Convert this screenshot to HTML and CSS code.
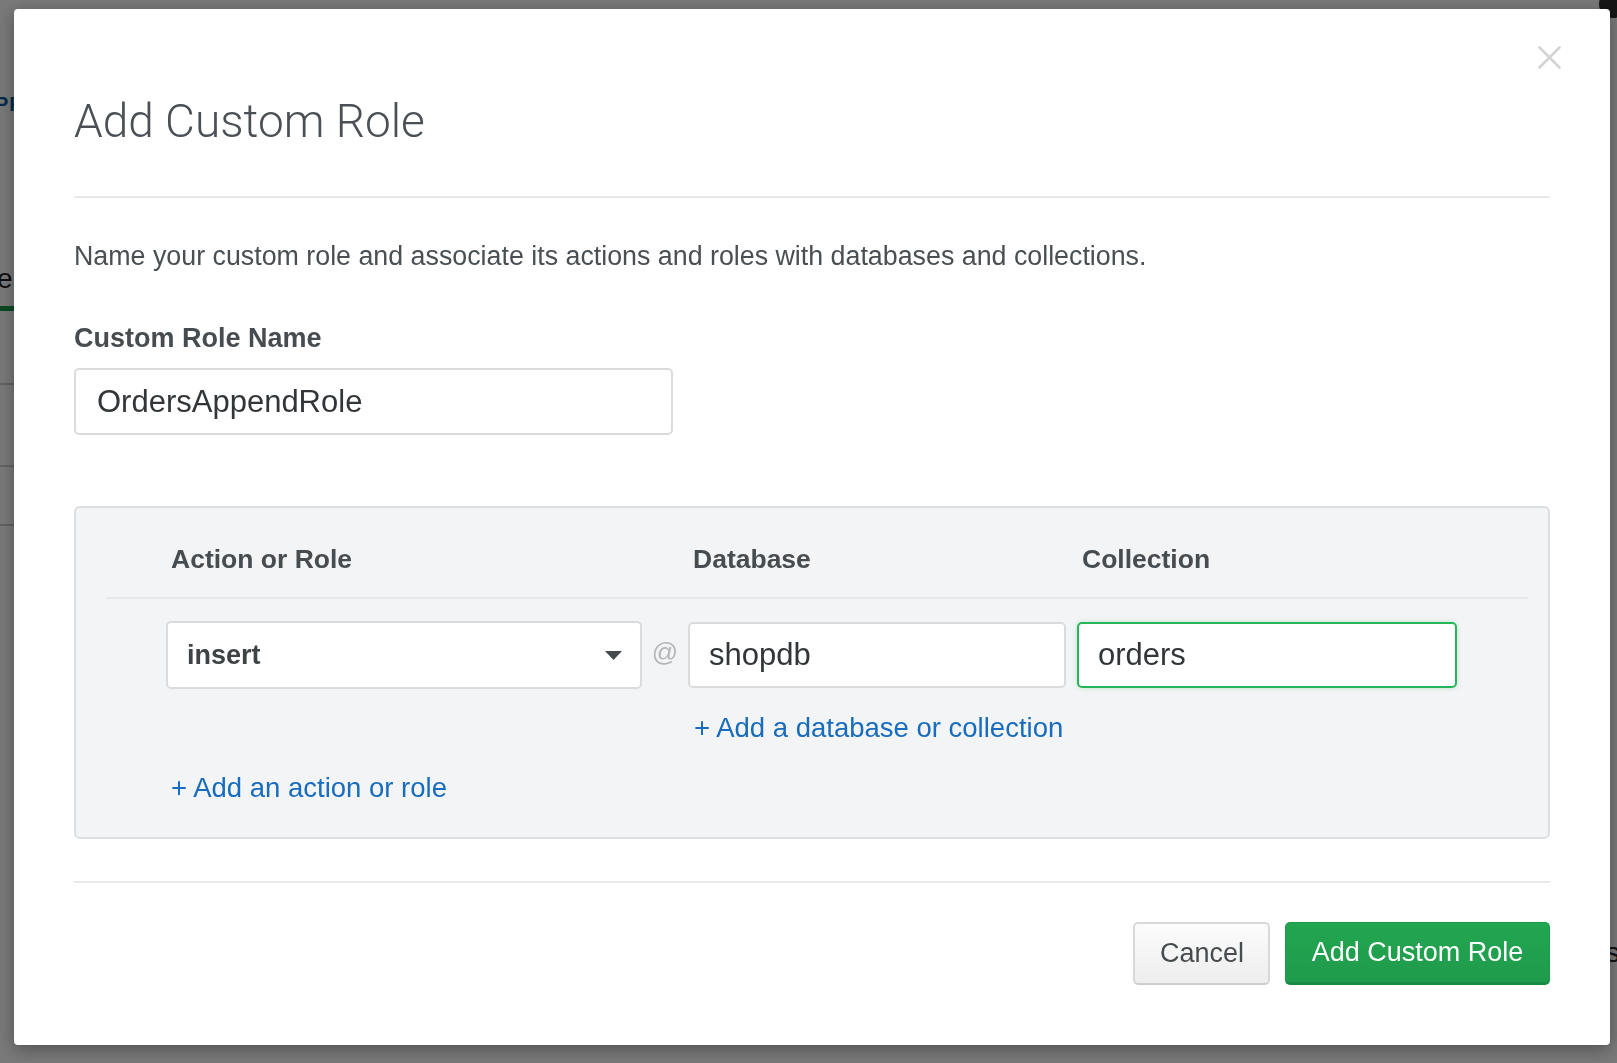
FILE: index.html
```html
<!DOCTYPE html>
<html lang="en">
<head>
<meta charset="utf-8">
<title>Add Custom Role</title>
<link rel="stylesheet" href="styles.css">
</head>
<body>
<div class="page">
  <div class="pg-top"><span class="pg-avatar"></span></div>
  <div class="pg-brand">PR</div>
  <div class="pg-tab">e</div>
  <div class="pg-tabbar"></div>
  <div class="pg-line pg-line1"></div>
  <div class="pg-line pg-line2"></div>
  <div class="pg-line pg-line3"></div>
  <div class="pg-side">s</div>
</div>
<div class="backdrop"></div>

<div class="modal" role="dialog">
  <button class="close" aria-label="Close">
    <svg width="23" height="23" viewBox="0 0 23 23"><path d="M1.5 1.5 L21.5 21.5 M21.5 1.5 L1.5 21.5" stroke="#d3d3d3" stroke-width="2.6" stroke-linecap="round"/></svg>
  </button>
  <div class="modal-header">
    <h1 class="modal-title">Add Custom Role</h1>
  </div>
  <div class="modal-body">
    <p class="desc">Name your custom role and associate its actions and roles with databases and collections.</p>
    <div class="field-label">Custom Role Name</div>
    <div class="input name-input">OrdersAppendRole</div>

    <div class="perm-box">
      <div class="perm-grid perm-head">
        <div class="head-cell">Action or Role</div>
        <div></div>
        <div class="head-cell">Database</div>
        <div></div>
        <div class="head-cell">Collection</div>
      </div>
      <div class="perm-grid perm-row">
        <div class="select">
          <span>insert</span>
          <svg width="17" height="9" viewBox="0 0 17 9"><path d="M0 0 H17 L8.5 9 Z" fill="#454a4d"/></svg>
        </div>
        <div class="at">@</div>
        <div class="input row-input">shopdb</div>
        <div></div>
        <div class="input row-input focused">orders</div>
      </div>
      <div class="perm-grid perm-sub">
        <div></div>
        <div></div>
        <a class="link db-link">+ Add a database or collection</a>
      </div>
      <a class="link action-link">+ Add an action or role</a>
    </div>
  </div>
  <div class="modal-footer">
    <button class="btn btn-default">Cancel</button>
    <button class="btn btn-primary">Add Custom Role</button>
  </div>
</div>
</body>
</html>
```

FILE: styles.css
```css
html, body {
  margin: 0;
  padding: 0;
}
body {
  width: 1617px;
  height: 1063px;
  overflow: hidden;
  position: relative;
  font-family: "Liberation Sans", Arial, sans-serif;
  background: #ffffff;
}

/* underlying page (dimmed) */
.page {
  height: 1063px;
  background: #ffffff;
  overflow: hidden;
}
.pg-top {
  height: 92px;
  display: flex;
  justify-content: flex-end;
}
.pg-avatar {
  width: 28px;
  height: 28px;
  border-radius: 50%;
  background: #2e2e2e;
  margin-top: -10px;
  margin-right: -10px;
}
.pg-brand {
  margin-left: -5px;
  font-size: 20px;
  font-weight: bold;
  line-height: 24px;
  color: #0e5a9e;
  letter-spacing: 1px;
}
.pg-tab {
  margin-top: 145px;
  margin-left: -3px;
  font-size: 28px;
  line-height: 36px;
  color: #1f1f1f;
}
.pg-tabbar {
  margin-top: 9px;
  width: 40px;
  height: 5px;
  background: #139a45;
}
.pg-line {
  height: 2px;
  background: #cfcfcf;
  width: 60px;
}
.pg-line1 { margin-top: 72px; }
.pg-line2 { margin-top: 80px; }
.pg-line3 { margin-top: 57px; }
.pg-side {
  margin-top: 411px;
  margin-left: 1606px;
  font-size: 28px;
  color: #222;
}

.backdrop {
  position: fixed;
  inset: 0;
  background: rgba(0, 0, 0, 0.52);
}

/* modal */
.modal {
  position: absolute;
  left: 14px;
  top: 9px;
  width: 1596px;
  box-sizing: border-box;
  background: #ffffff;
  border-radius: 4px;
  box-shadow: 0 4px 18px rgba(0, 0, 0, 0.35);
  padding: 0 60px 60px;
  color: #494f53;
}
.close {
  position: absolute;
  left: 1524px;
  top: 37px;
  width: 23px;
  height: 23px;
  padding: 0;
  border: 0;
  background: none;
  display: block;
}
.close svg { display: block; }

.modal-header {
  padding: 84px 0 47px;
  border-bottom: 2px solid #e8e9ea;
}
.modal-title {
  margin: 0;
  font-family: Roboto, "Liberation Sans", sans-serif;
  font-weight: 300;
  font-size: 46px;
  line-height: 56px;
  color: #4a5055;
}

.desc {
  margin: 40px 0 0;
  font-size: 26.8px;
  line-height: 36px;
  color: #4a4f53;
}
.field-label {
  margin-top: 46px;
  font-size: 27px;
  font-weight: bold;
  line-height: 36px;
  color: #464c50;
}
.input {
  box-sizing: border-box;
  height: 67px;
  border: 2px solid #d9dbdc;
  border-radius: 5px;
  background: #ffffff;
  padding-left: 19px;
  font-size: 31px;
  line-height: 63px;
  color: #333638;
}
.name-input {
  margin-top: 12px;
  width: 599px;
  padding-left: 21px;
}

.perm-box {
  margin-top: 71px;
  border: 2px solid #dcdee0;
  border-radius: 6px;
  background: #f3f4f6;
  padding: 33px 20px 31px 30px;
}
.perm-grid {
  display: grid;
  grid-template-columns: 476px 46px 378px 11px 380px;
  padding-left: 60px;
}
.perm-head {
  padding-bottom: 20px;
  border-bottom: 2px solid #e5e7e9;
}
.head-cell {
  padding-left: 5px;
  font-size: 26.5px;
  font-weight: bold;
  line-height: 36px;
  color: #464c50;
}
.perm-row {
  margin-top: 22px;
  align-items: center;
}
.select {
  box-sizing: border-box;
  height: 68px;
  border: 2px solid #d9dbdc;
  border-radius: 5px;
  background: #ffffff;
  display: flex;
  align-items: center;
  justify-content: space-between;
  padding: 0 18px 0 19px;
  font-size: 27px;
  font-weight: bold;
  color: #3e4346;
}
.select svg { display: block; }
.at {
  text-align: center;
  font-size: 26px;
  color: #b4b6b8;
  margin-top: -6px;
}
.row-input {
  height: 66px;
  line-height: 62px;
}
.focused {
  border-color: #27b55a;
  box-shadow: 0 0 5px rgba(39, 181, 90, 0.25);
}
.link {
  display: block;
  font-size: 27.5px;
  line-height: 36px;
  color: #176cbd;
  text-decoration: none;
  cursor: pointer;
}
.perm-sub {
  margin-top: 21px;
}
.db-link {
  padding-left: 6px;
  white-space: nowrap;
}
.action-link {
  margin-top: 24px;
  margin-left: 65px;
}

.modal-footer {
  margin-top: 42px;
  border-top: 2px solid #e8e9ea;
  padding-top: 39px;
  display: flex;
  justify-content: flex-end;
  gap: 15px;
}
.btn {
  box-sizing: border-box;
  height: 63px;
  border-radius: 5px;
  font-family: "Liberation Sans", Arial, sans-serif;
  font-size: 27px;
  line-height: 1;
  padding: 0 25px;
  cursor: pointer;
}
.btn-default {
  width: 137px;
  border: 2px solid #d6d8da;
  border-bottom-color: #cbcdcf;
  background: linear-gradient(#fcfcfc, #ededed);
  color: #464b4e;
}
.btn-primary {
  width: 265px;
  border: 1px solid #1c9a4a;
  border-bottom: 3px solid #188a41;
  background: linear-gradient(#22a650, #1f9b4c);
  color: #ffffff;
}
```
